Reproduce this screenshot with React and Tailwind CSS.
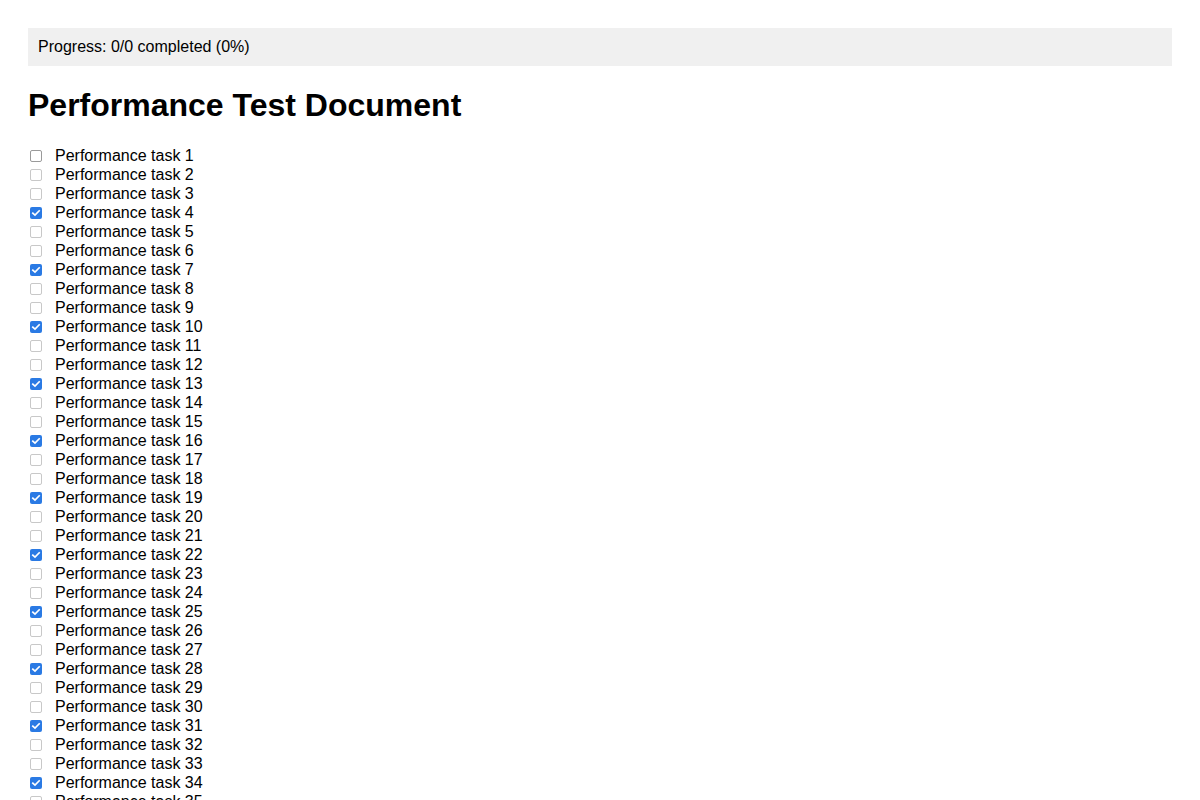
const tasks = Array.from({ length: 100 }, (_, i) => ({
  id: i + 1,
  done: (i + 1) % 3 === 1 && i > 0,
}));

function Check({ checked, hover }) {
  if (checked) {
    return (
      <span className="shrink-0 w-[12px] h-[12px] ml-[2px] mr-[13px] rounded-[2px] bg-[#2a7ae4] flex items-center justify-center">
        <svg viewBox="0 0 12 12" className="w-[10px] h-[10px]">
          <path d="M2.2 6.2 L4.8 8.6 L9.8 3.4" fill="none" stroke="#fff" strokeWidth="2" strokeLinecap="square" />
        </svg>
      </span>
    );
  }
  return (
    <span
      className={
        hover
          ? "shrink-0 w-[12px] h-[12px] ml-[2px] mr-[13px] rounded-[2px] border-[1.5px] border-[#9a9a9a] bg-white"
          : "shrink-0 w-[12px] h-[12px] ml-[2px] mr-[13px] rounded-[2px] border-[1.5px] border-[#c8c8c8] bg-white"
      }
    />
  );
}

export default function App() {
  return (
    <div className="p-[28px] font-['Liberation_Sans',Arial,sans-serif] text-black bg-white">
      <div className="bg-[#f0f0f0] px-[10px] py-[10px] text-[16px] leading-[18px]">
        Progress: 0/0 completed (0%)
      </div>
      <h1 className="text-[32px] font-bold leading-[37px] mt-[21px] mb-[22px]">
        Performance Test Document
      </h1>
      <ul>
        {tasks.map((t) => (
          <li key={t.id} className="flex items-center h-[19px] text-[16px]">
            <Check checked={t.done} hover={t.id === 1} />
            <span>Performance task {t.id}</span>
          </li>
        ))}
      </ul>
    </div>
  );
}
